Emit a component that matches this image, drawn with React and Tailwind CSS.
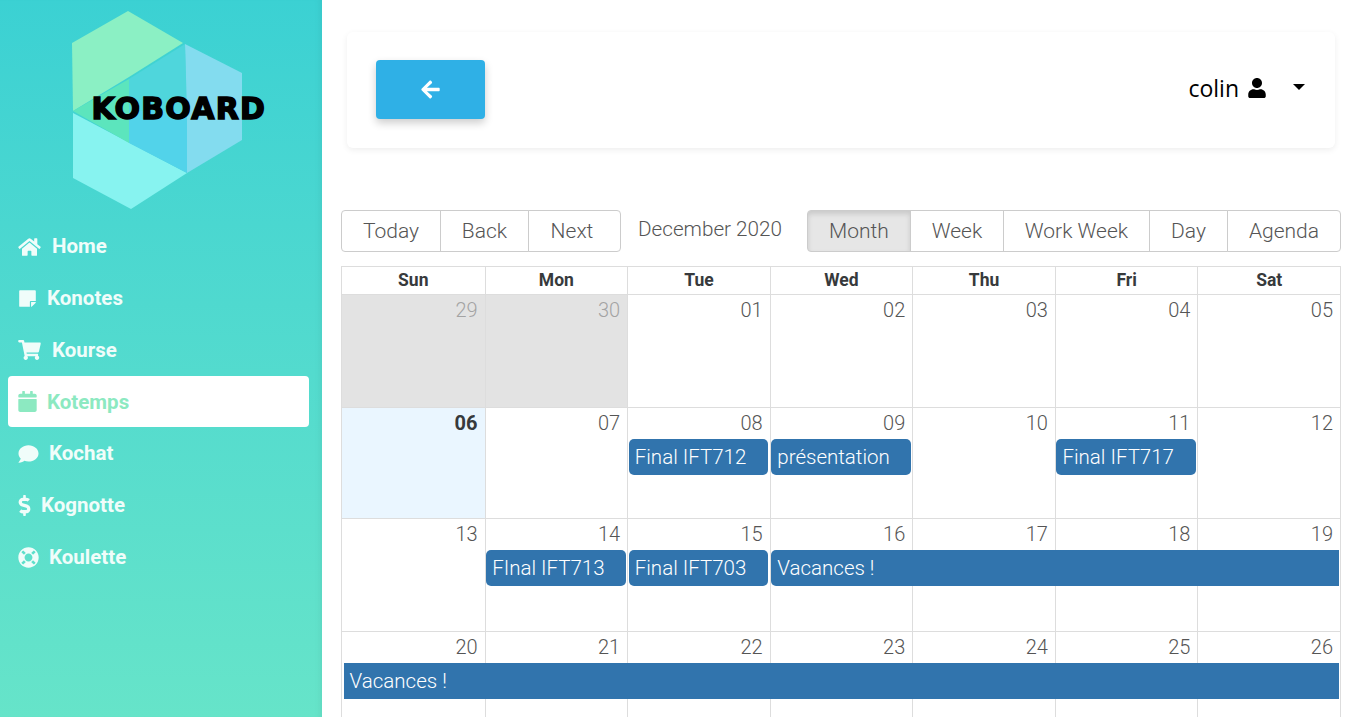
import React from 'react';
import {
  FaHome,
  FaStickyNote,
  FaShoppingCart,
  FaCalendar,
  FaComment,
  FaDollarSign,
  FaLifeRing,
  FaUser,
  FaArrowLeft
} from 'react-icons/fa';

const navItems = [
  { label: 'Home', icon: FaHome, iconClass: 'w-[23px] h-[20px] mr-px' },
  { label: 'Konotes', icon: FaStickyNote, iconClass: 'w-[19px] h-[19px]' },
  { label: 'Kourse', icon: FaShoppingCart, iconClass: 'w-[23px] h-[20px] mr-px' },
  { label: 'Kotemps', icon: FaCalendar, iconClass: 'w-[19px] h-[21px]', active: true },
  { label: 'Kochat', icon: FaComment, iconClass: 'w-[21px] h-[20px]' },
  { label: 'Kognotte', icon: FaDollarSign, iconClass: 'w-[13px] h-[21px]' },
  { label: 'Koulette', icon: FaLifeRing, iconClass: 'w-[21px] h-[21px]' }
];

const weeks = [
  {
    height: 'h-[113px]',
    days: ['29', '30', '01', '02', '03', '04', '05'],
    events: []
  },
  {
    height: 'h-[111px]',
    days: ['06', '07', '08', '09', '10', '11', '12'],
    events: [
      { title: 'Final IFT712', col: 'col-start-3' },
      { title: 'présentation', col: 'col-start-4' },
      { title: 'Final IFT717', col: 'col-start-6' }
    ]
  },
  {
    height: 'h-[113px]',
    days: ['13', '14', '15', '16', '17', '18', '19'],
    events: [
      { title: 'FInal IFT713', col: 'col-start-2' },
      { title: 'Final IFT703', col: 'col-start-3' },
      { title: 'Vacances !', col: 'col-start-4 col-span-4', open: 'right' }
    ]
  },
  {
    height: 'h-[113px]',
    days: ['20', '21', '22', '23', '24', '25', '26'],
    events: [{ title: 'Vacances !', col: 'col-start-1 col-span-7', open: 'both' }]
  }
];

const Logo = () => (
  <div className="relative h-[200px] w-[172px]">
    <svg viewBox="0 0 172 200" className="h-full w-full">
      <polygon points="56,0 111,32 57,66 1,100 0,32" fill="#8bf0c4" />
      <polygon points="113,33 170,62 170,129 115,162" fill="#83dcef" />
      <polygon points="1,102 115,162 59,198 1,167" fill="#87f3f0" />
      <polygon points="1,100 57,68 57,132" fill="#5ce5bd" />
      <polygon points="57,68 113,33 115,100 57,100" fill="#4fd6dc" />
      <polygon points="57,100 115,100 115,162 57,132" fill="#52d3ea" />
    </svg>
    <span className="absolute left-[19.5px] top-[85px] text-[30px] font-black leading-[26px] tracking-[1.2px] text-black [font-family:'DejaVu_Sans',sans-serif] [-webkit-text-stroke:1.5px_black]">
      KOBOARD
    </span>
  </div>
);

const Sidebar = () => (
  <aside className="flex h-[717px] w-[322px] shrink-0 flex-col bg-gradient-to-b from-[#3bd1d3] to-[#66e4c9] px-2 shadow-[inset_-6px_0_6px_-4px_rgba(0,0,0,0.05)]">
    <div className="flex justify-center pt-[11px] pr-[6px]">
      <Logo />
    </div>
    <nav className="mt-[10px] flex w-[301px] flex-col gap-[0.8px]">
      {navItems.map(({ label, icon: Icon, iconClass, active }) => (
        <a
          key={label}
          className={`flex h-[51px] items-center gap-[10px] rounded-[4px] pl-[10px] text-[20.5px] font-bold [font-family:Roboto,sans-serif] ${
            active ? 'bg-white text-[#8ce9c1]' : 'text-[#f0fdfa]'
          }`}
        >
          <Icon className={iconClass} />
          <span>{label}</span>
        </a>
      ))}
    </nav>
  </aside>
);

const TopBar = () => (
  <header className="ml-[6px] mr-[6px] flex h-[116px] shrink-0 items-center justify-between rounded-[6px] bg-white pl-[29px] pr-[30px] shadow-[0_2px_6px_rgba(0,0,0,0.07)]">
    <button className="flex h-[59px] w-[109px] -translate-y-[1px] items-center justify-center rounded-[4px] bg-[#2fb0e6] text-white shadow-[0_4px_8px_rgba(0,0,0,0.2)]">
      <FaArrowLeft className="h-[21px] w-[21px]" />
    </button>
    <div className="flex -translate-y-[2px] items-center text-black">
      <span className="text-[23px] leading-none [font-family:'Open_Sans',sans-serif]">colin</span>
      <FaUser className="ml-[9px] h-[20px] w-[18px]" />
      <span className="ml-[27px] mb-[3px] h-0 w-0 border-x-[6.5px] border-t-[6px] border-x-transparent border-t-black" />
    </div>
  </header>
);

const ToolbarButton = ({ children, width, active, first, last }) => (
  <button
    className={`h-[42px] ${width} border border-[#ccc] pt-[2px] text-[21px] font-light text-[#555] ${
      first ? 'rounded-l-[4px]' : '-ml-px'
    } ${last ? 'rounded-r-[4px]' : ''} ${
      active ? 'bg-[#e6e6e6] shadow-[inset_0_3px_5px_rgba(0,0,0,0.125)]' : 'bg-white'
    }`}
  >
    {children}
  </button>
);

const Toolbar = () => (
  <div className="flex items-center justify-between [font-family:Roboto,sans-serif]">
    <div className="flex">
      <ToolbarButton width="w-[100px]" first>Today</ToolbarButton>
      <ToolbarButton width="w-[89px]">Back</ToolbarButton>
      <ToolbarButton width="w-[93px] pr-[5px]" last>Next</ToolbarButton>
    </div>
    <span className="mb-[3px] ml-[-8px] text-[20.7px] font-light text-[#555]">December 2020</span>
    <div className="flex">
      <ToolbarButton width="w-[104px]" first active>Month</ToolbarButton>
      <ToolbarButton width="w-[94px]">Week</ToolbarButton>
      <ToolbarButton width="w-[147px]">Work Week</ToolbarButton>
      <ToolbarButton width="w-[79px]">Day</ToolbarButton>
      <ToolbarButton width="w-[114px]" last>Agenda</ToolbarButton>
    </div>
  </div>
);

const Week = ({ height, days, events, index }) => (
  <div className={`grid ${height} grid-cols-7 grid-rows-[31px_37px_1fr] overflow-hidden border-t border-[#ddd]`}>
    {days.map((day, i) => {
      const offRange = index === 0 && i < 2;
      const today = day === '06';
      return (
        <div
          key={day}
          style={{ gridColumnStart: i + 1 }}
          className={`row-span-3 row-start-1 ${i > 0 ? 'border-l border-[#ddd]' : ''} ${
            offRange ? 'bg-[#e3e3e3]' : today ? 'bg-[#eaf6ff]' : 'bg-white'
          } pr-[7px] pt-[1px] text-right text-[20px] leading-[28px] ${
            today ? 'font-bold text-[#373a3c]' : offRange ? 'font-light text-[#a3a3a3]' : 'font-light text-[#555]'
          }`}
        >
          {day}
        </div>
      );
    })}
    {events.map((event) => (
      <div
        key={event.title + event.col}
        className={`${event.col} row-start-2 z-10 ml-[1.6px] mr-[1.4px] flex h-[36px] items-center bg-[#3174ad] pl-[6px] text-[20.5px] font-light text-white ${
          event.open === 'both' ? '' : event.open === 'right' ? 'rounded-l-[5px]' : 'rounded-[5px]'
        }`}
      >
        {event.title}
      </div>
    ))}
  </div>
);

const Calendar = () => (
  <div className="mt-[14px] border border-b-0 border-[#ddd] [font-family:Roboto,sans-serif]">
    <div className="grid h-[27px] grid-cols-7">
      {['Sun', 'Mon', 'Tue', 'Wed', 'Thu', 'Fri', 'Sat'].map((name, i) => (
        <div
          key={name}
          className={`flex items-center justify-center text-[17.5px] font-bold text-[#373a3c] ${
            i > 0 ? 'border-l border-[#ddd]' : ''
          }`}
        >
          {name}
        </div>
      ))}
    </div>
    {weeks.map((week, i) => (
      <Week key={i} index={i} {...week} />
    ))}
  </div>
);

export default function App() {
  return (
    <div className="flex h-[717px] w-[1345px] overflow-hidden bg-white">
      <Sidebar />
      <main className="flex w-[1023px] flex-col overflow-hidden pl-[19px] pr-[4px] pt-[32px]">
        <TopBar />
        <div className="mt-[62px]">
          <Toolbar />
          <Calendar />
        </div>
      </main>
    </div>
  );
}
